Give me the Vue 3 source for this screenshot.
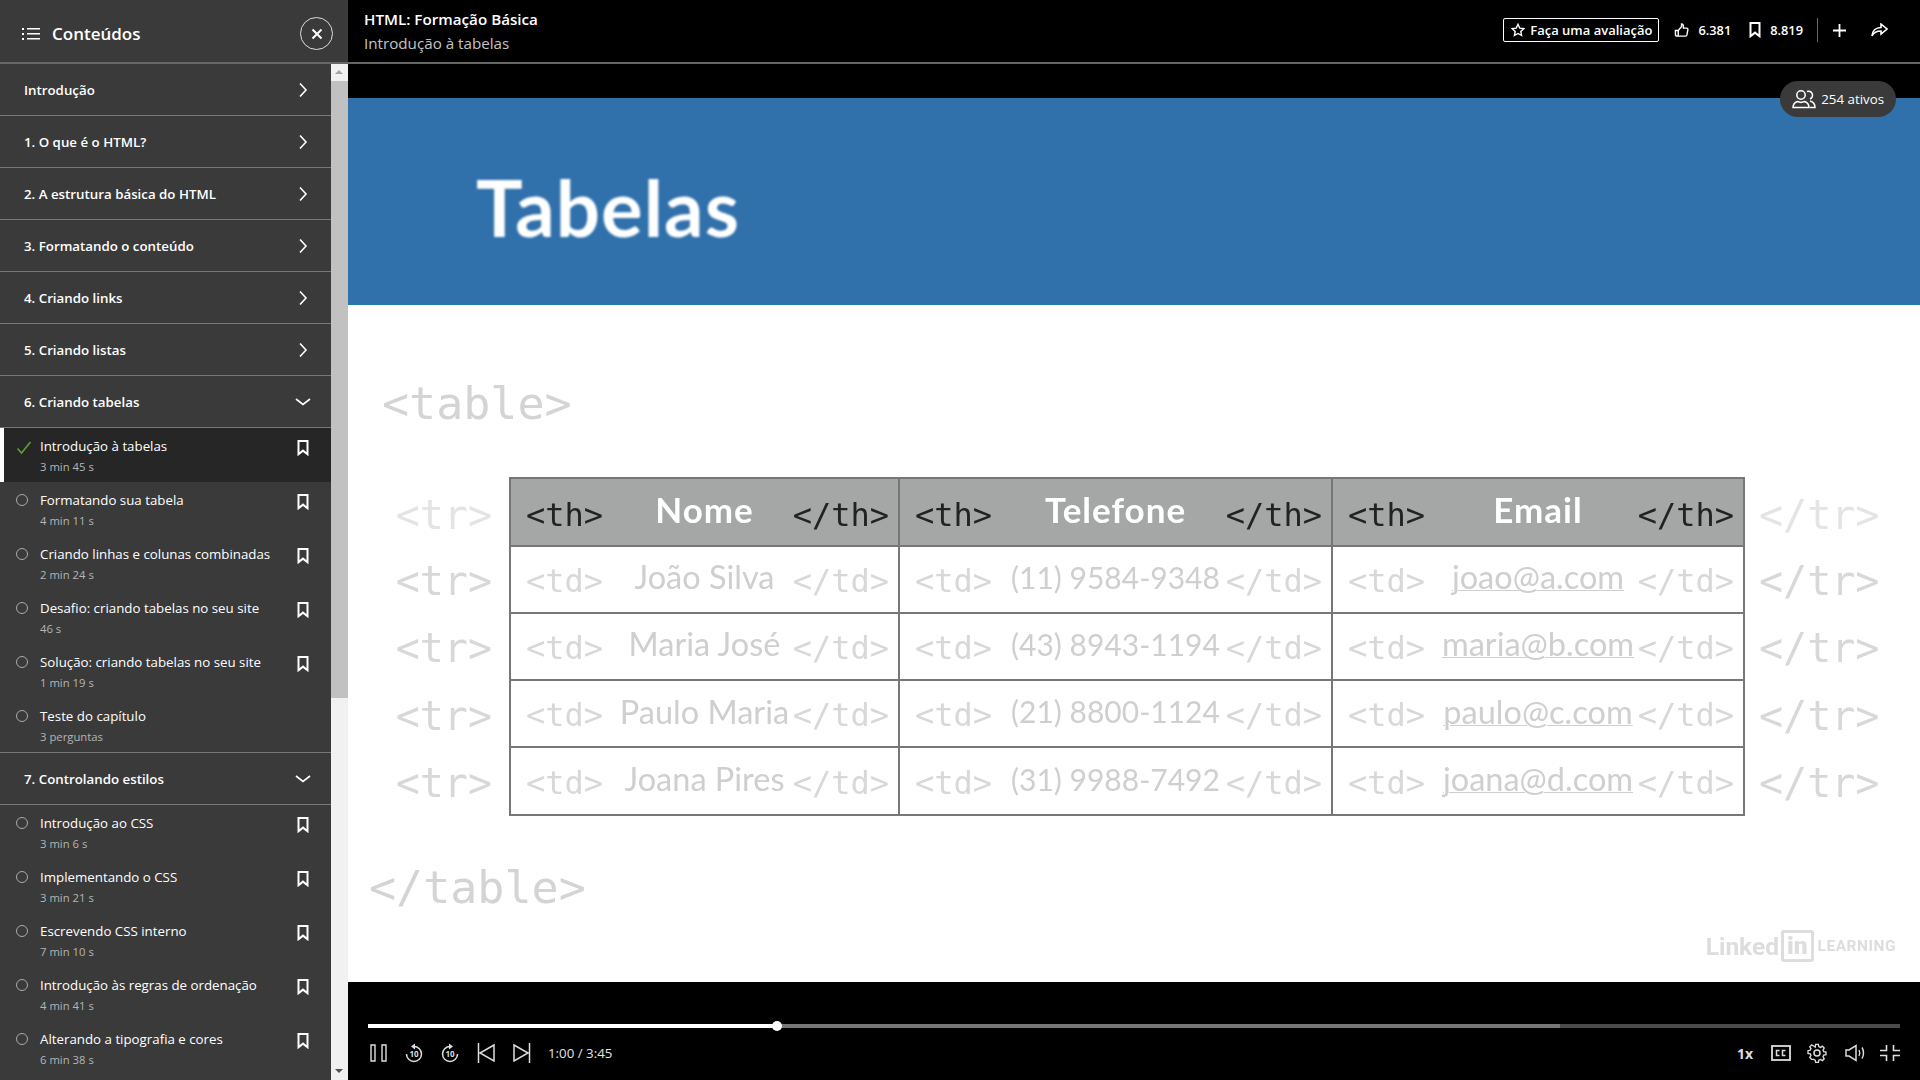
<template>
  <div class="player">
    <svg class="defs" width="0" height="0">
      <defs>
        <symbol id="bookmark" viewBox="0 0 12 16">
          <path d="M1.500 1h9v13.200L6 10.600l-4.500 3.600z" fill="none" stroke="currentColor" stroke-width="2" />
        </symbol>
        <symbol id="chev-right" viewBox="0 0 10 16">
          <path d="M2 1.500 8 8l-6 6.500" fill="none" stroke="currentColor" stroke-width="1.600" />
        </symbol>
      </defs>
    </svg>

    <aside class="sidebar">
      <header class="side-head">
        <svg class="list-icon" width="18" height="16" viewBox="0 0 18 16">
          <path d="M0 2h2v2H0zM0 7h2v2H0zM0 12h2v2H0zM5 2h13v1.500H5zM5 7h13v1.500H5zM5 12h13v1.500H5z" fill="#fff" />
        </svg>
        <span class="side-title">Conteúdos</span>
        <button class="close">
          <svg width="12" height="12" viewBox="0 0 12 12">
            <path d="M1.500 1.500l9 9M10.500 1.500l-9 9" stroke="#fff" stroke-width="2" />
          </svg>
        </button>
      </header>
      <div class="side-body">
        <div class="toc">
          <template v-for="(s, si) in sections" :key="s.name">
            <div class="section" :class="{ ruled: si === 7 }">
              <span>{{ s.name }}</span>
              <svg v-if="!s.lessons" class="chev" width="10" height="16"><use href="#chev-right" /></svg>
              <svg v-else class="chev-down" width="16" height="10" viewBox="0 0 16 10">
                <path d="M1 2l7 5.500L15 2" fill="none" stroke="#fff" stroke-width="1.600" />
              </svg>
            </div>
            <div
              v-for="l in s.lessons"
              :key="l.title"
              class="lesson"
              :class="{ active: l.done }"
            >
              <svg v-if="l.done" class="state" width="16" height="14" viewBox="0 0 16 14">
                <path d="M1.500 7.500 5.500 12 14.500 1" fill="none" stroke="#5f9e3a" stroke-width="1.600" />
              </svg>
              <span v-else class="dot"></span>
              <div class="lesson-text">
                <div class="lesson-title">{{ l.title }}</div>
                <div class="lesson-time">{{ l.time }}</div>
              </div>
              <svg v-if="!l.quiz" class="mark" width="12" height="16"><use href="#bookmark" /></svg>
            </div>
          </template>
          <div class="toc-end"></div>
        </div>
        <div class="scrollbar">
          <span class="arrow up"></span>
          <span class="thumb"></span>
          <span class="arrow down"></span>
        </div>
      </div>
    </aside>

    <main class="main">
      <header class="topbar">
        <div class="titles">
          <div class="course">HTML: Formação Básica</div>
          <div class="video">Introdução à tabelas</div>
        </div>
        <div class="actions">
          <button class="rate">
            <svg width="14" height="14" viewBox="0 0 16 16">
              <path d="M8 1.500l2 4.300 4.700.6-3.500 3.200.9 4.700L8 12l-4.100 2.300.9-4.700L1.300 6.400 6 5.800z" fill="none" stroke="#fff" stroke-width="1.600" />
            </svg>
            Faça uma avaliação
          </button>
          <span class="stat">
            <svg width="15" height="16" viewBox="0 0 16 16">
              <path d="M1.500 8.500h3v6h-1a2 2 0 0 1-2-2zM4.500 8.500 8 4.500V1.500c1.500 0 2 1 2 2.500v2h3.500c1 0 1.500.8 1.300 1.700l-1 5.500c-.2.800-.7 1.300-1.500 1.300h-7.300" fill="none" stroke="#fff" stroke-width="1.500" />
            </svg>
            6.381
          </span>
          <span class="stat">
            <svg width="12" height="16"><use href="#bookmark" /></svg>
            8.819
          </span>
          <span class="divider"></span>
          <svg class="plus" width="13" height="13" viewBox="0 0 13 13">
            <path d="M6.500 0v13M0 6.500h13" stroke="#fff" stroke-width="1.800" />
          </svg>
          <svg class="share" width="17" height="14" viewBox="0 0 17 14">
            <path d="M10 1l6 5-6 5V8C6 8 3 9 1 13c.3-5 3.500-8.500 9-8.500z" fill="none" stroke="#fff" stroke-width="1.600" />
          </svg>
        </div>
      </header>

      <section class="stage">
        <div class="presence">
          <svg width="24" height="20" viewBox="0 0 24 20">
            <circle cx="9" cy="6" r="4.200" fill="none" stroke="#fff" stroke-width="1.500" />
            <path d="M1 18.500c0-3 1.500-5 4.500-6l3.500 1 3.500-1c3 1 4.500 3 4.500 6z" fill="none" stroke="#fff" stroke-width="1.500" />
            <path d="M15 2.500a3.800 3.800 0 0 1 3 7.500M18 12c3 .7 5 2.600 5 6.500h-5" fill="none" stroke="#fff" stroke-width="1.500" />
          </svg>
          254 ativos
        </div>
        <div class="slide">
          <div class="banner"><h1>Tabelas</h1></div>
          <div class="slide-body">
            <div class="code-open">&lt;table&gt;</div>
            <div class="grid">
              <template v-for="(r, i) in rows" :key="r[0]">
                <div class="tr-tag left" :class="{ faint: i === 0 }">&lt;tr&gt;</div>
                <div
                  v-for="(cell, c) in r"
                  :key="cell"
                  class="cell"
                  :class="{ head: i === 0, first: c === 0, phone: i > 0 && c === 1, mail: i > 0 && c === 2 }"
                >
                  <span class="tag">{{ i === 0 ? '&lt;th&gt;' : '&lt;td&gt;' }}</span>
                  <span class="value">{{ cell }}</span>
                  <span class="tag end">{{ i === 0 ? '&lt;/th&gt;' : '&lt;/td&gt;' }}</span>
                </div>
                <div class="tr-tag right" :class="{ faint: i === 0 }">&lt;/tr&gt;</div>
              </template>
            </div>
            <div class="code-close">&lt;/table&gt;</div>
            <div class="watermark">Linked<b>in</b><small>LEARNING</small></div>
          </div>
        </div>
      </section>

      <footer class="controls">
        <div class="progress">
          <span class="played"></span>
          <span class="knob"></span>
          <span class="buffered"></span>
        </div>
        <div class="ctrl-row">
          <div class="ctrl-left">
            <svg width="17" height="18" viewBox="0 0 17 18">
              <path d="M1 1h4v16H1zM12 1h4v16h-4z" fill="none" stroke="#ddd" stroke-width="1.400" />
            </svg>
            <svg width="18" height="20" viewBox="0 0 18 20">
              <path d="M9 3.500a7.500 7.500 0 1 1-7.500 7.500" fill="none" stroke="#ddd" stroke-width="1.500" />
              <path d="M10 .5 6 3.500l4 3z" fill="#ddd" />
              <text x="9" y="14" text-anchor="middle" class="skip">10</text>
            </svg>
            <svg width="18" height="20" viewBox="0 0 18 20">
              <path d="M9 3.500a7.500 7.500 0 1 0 7.500 7.500" fill="none" stroke="#ddd" stroke-width="1.500" />
              <path d="M8 .5l4 3-4 3z" fill="#ddd" />
              <text x="9" y="14" text-anchor="middle" class="skip">10</text>
            </svg>
            <svg width="18" height="20" viewBox="0 0 18 20">
              <path d="M1.500 0v20M17 2 3 10l14 8z" fill="none" stroke="#ddd" stroke-width="1.500" />
            </svg>
            <svg width="18" height="20" viewBox="0 0 18 20">
              <path d="M16.500 0v20M1 2l14 8-14 8z" fill="none" stroke="#ddd" stroke-width="1.500" />
            </svg>
            <span class="time">1:00 / 3:45</span>
          </div>
          <div class="ctrl-right">
            <span class="speed">1x</span>
            <svg width="20" height="16" viewBox="0 0 20 16">
              <rect x="1" y="1" width="18" height="14" fill="none" stroke="#ddd" stroke-width="1.800" />
              <path d="M8.500 5.500h-3v5h3M14.500 5.500h-3v5h3" fill="none" stroke="#ddd" stroke-width="1.500" />
            </svg>
            <svg width="20" height="20" viewBox="0 0 20 20">
              <circle cx="10" cy="10" r="3" fill="none" stroke="#ddd" stroke-width="1.500" />
              <path d="M8.500 1h3l.5 2.500 1.800.8 2.200-1.300 2 2.100-1.300 2.100.8 1.800 2.500.5v3l-2.500.5-.8 1.800 1.300 2.200-2 2-2.200-1.300-1.800.8-.5 2.500h-3l-.5-2.500-1.800-.8L4 17.500l-2-2 1.300-2.200-.8-1.800L0 11V8l2.500-.5.8-1.800L2 3.600l2-2.100 2.200 1.300L8 4z" transform="translate(1 .5) scale(.9)" fill="none" stroke="#ddd" stroke-width="1.500" />
            </svg>
            <svg class="speaker" width="21" height="18" viewBox="0 0 21 18">
              <path d="M1 6h3l7-4.500v15L4 12H1z" fill="none" stroke="#ddd" stroke-width="1.500" />
              <path d="M14 6c1 1.800 1 4.200 0 6M17 3.500c2 3 2 8 0 11" fill="none" stroke="#ddd" stroke-width="1.400" />
            </svg>
            <svg width="20" height="16" viewBox="0 0 20 16">
              <path d="M0 5.500h6.500V0M13.500 0v5.500H20M0 10.500h6.500V16M13.500 16v-5.500H20" fill="none" stroke="#ddd" stroke-width="1.600" />
            </svg>
          </div>
        </div>
      </footer>
    </main>
  </div>
</template>

<script setup>
const sections = [
  { name: 'Introdução' },
  { name: '1. O que é o HTML?' },
  { name: '2. A estrutura básica do HTML' },
  { name: '3. Formatando o conteúdo' },
  { name: '4. Criando links' },
  { name: '5. Criando listas' },
  {
    name: '6. Criando tabelas',
    lessons: [
      { title: 'Introdução à tabelas', time: '3 min 45 s', done: true },
      { title: 'Formatando sua tabela', time: '4 min 11 s' },
      { title: 'Criando linhas e colunas combinadas', time: '2 min 24 s' },
      { title: 'Desafio: criando tabelas no seu site', time: '46 s' },
      { title: 'Solução: criando tabelas no seu site', time: '1 min 19 s' },
      { title: 'Teste do capítulo', time: '3 perguntas', quiz: true }
    ]
  },
  {
    name: '7. Controlando estilos',
    lessons: [
      { title: 'Introdução ao CSS', time: '3 min 6 s' },
      { title: 'Implementando o CSS', time: '3 min 21 s' },
      { title: 'Escrevendo CSS interno', time: '7 min 10 s' },
      { title: 'Introdução às regras de ordenação', time: '4 min 41 s' },
      { title: 'Alterando a tipografia e cores', time: '6 min 38 s' }
    ]
  }
]

const rows = [
  ['Nome', 'Telefone', 'Email'],
  ['João Silva', '(11) 9584-9348', 'joao@a.com'],
  ['Maria José', '(43) 8943-1194', 'maria@b.com'],
  ['Paulo Maria', '(21) 8800-1124', 'paulo@c.com'],
  ['Joana Pires', '(31) 9988-7492', 'joana@d.com']
]
</script>

<style>
html, body { background: #000; overflow: hidden; }
</style>

<style scoped>
.player {
  display: flex;
  width: 1920px;
  height: 1080px;
  overflow: hidden;
  background: #000;
  color: #fff;
  font-family: "Open Sans", "Noto Sans", sans-serif;
}
.defs { position: absolute; }

.sidebar {
  display: flex;
  flex-direction: column;
  flex: 0 0 348px;
  background: #3a3a3a;
}
.side-head {
  display: flex;
  align-items: center;
  height: 57px;
  padding: 5px 16px 0 22px;
  border-bottom: 2px solid #666;
  box-sizing: content-box;
}
.list-icon { margin-right: 12px; }
.side-title { flex: 1; font-size: 17px; font-weight: 600; }
.close {
  display: flex;
  align-items: center;
  justify-content: center;
  width: 33px;
  height: 33px;
  padding: 0;
  margin-right: -1px;
  background: none;
  border: 1px solid #ddd;
  border-radius: 50%;
}
.side-body { display: flex; flex: 1; min-height: 0; }
.toc { flex: 1; min-width: 0; }
.section {
  display: flex;
  align-items: center;
  justify-content: space-between;
  height: 52px;
  box-sizing: border-box;
  padding: 0 23px 0 24px;
  border-bottom: 1px solid #777;
  font-size: 13.300px;
  font-weight: 600;
}
.section.ruled { height: 53px; border-top: 1px solid #777; }
.chev-down { margin-right: -3px; }
.lesson {
  display: flex;
  align-items: flex-start;
  height: 54px;
  box-sizing: border-box;
  padding: 8px 22px 0 16px;
}
.lesson.active {
  background: #262626;
  box-shadow: inset 4px 0 0 #fff;
}
.dot {
  flex: none;
  width: 12px;
  height: 12px;
  box-sizing: border-box;
  margin: 4px 12px 0 0;
  border: 1px solid #aaa;
  border-radius: 50%;
}
.state { flex: none; margin: 5px 8px 0 0; }
.lesson-text { flex: 1; min-width: 0; }
.lesson-title { font-size: 13.300px; line-height: 20px; }
.lesson-time { margin-top: 2px; font-size: 11.300px; line-height: 18px; color: #b5b5b5; }
.mark { flex: none; margin-top: 4px; }
.toc-end { height: 4px; }
.scrollbar {
  display: flex;
  flex-direction: column;
  flex: 0 0 17px;
  background: #f1f1f1;
}
.thumb { flex: 0 0 617px; background: #c1c1c1; }
.arrow { flex: 0 0 17px; position: relative; }
.arrow::after {
  content: "";
  position: absolute;
  left: 4px;
  border-left: 4px solid transparent;
  border-right: 4px solid transparent;
}
.arrow.up::after { top: 6px; border-bottom: 4px solid #a3a3a3; }
.arrow.down { margin-top: auto; }
.arrow.down::after { top: 6px; border-top: 4px solid #505050; }

.main { display: flex; flex-direction: column; flex: 1; min-width: 0; }
.topbar {
  display: flex;
  align-items: center;
  justify-content: space-between;
  height: 62px;
  padding: 0 32px 0 16px;
  border-bottom: 2px solid #666;
  box-sizing: content-box;
}
.course { font-size: 15.200px; font-weight: 600; line-height: 22px; }
.video { margin-top: 2px; font-size: 15.200px; line-height: 22px; color: #c4c4c4; }
.actions { display: flex; align-items: center; margin-top: -2px; }
.rate {
  display: flex;
  align-items: center;
  gap: 5px;
  height: 24px;
  margin-right: -3px;
  padding: 0 6px 0 7px;
  background: none;
  border: 1px solid #fff;
  border-radius: 2px;
  color: #fff;
  font: 600 13px "Open Sans", sans-serif;
}
.stat {
  display: flex;
  align-items: center;
  margin-left: 18px;
  gap: 9px;
  font-size: 12.800px;
  font-weight: 600;
}
.divider { width: 1px; height: 24px; margin: 0 15px 0 14px; background: #666; }
.share { margin-left: 25px; }

.stage { position: relative; flex: 1; min-height: 0; overflow: hidden; background: #000; }
.presence {
  position: absolute;
  top: 17px;
  right: 24px;
  display: flex;
  align-items: center;
  gap: 5px;
  height: 36px;
  padding: 0 12px;
  background: #3a3a3a;
  border-radius: 18px;
  font-size: 13.300px;
}

.slide { display: flex; flex-direction: column; height: 884px; margin-top: 34px; }
.banner {
  flex: 0 0 207px;
  display: flex;
  align-items: center;
  padding: 12px 0 0 128px;
  box-sizing: border-box;
  background: #3070ab;
  border-bottom: 2px solid #1f7aa6;
}
.banner h1 {
  margin: 0;
  font: 700 78px Lato, sans-serif;
  letter-spacing: 1px;
  color: #fff;
  filter: blur(.8px);
}
.slide-body {
  position: relative;
  flex: 1;
  padding-top: 73px;
  background: #fff;
  font-family: "DejaVu Sans Mono", monospace;
  color: #d8d8d8;
  filter: blur(.4px);
}
.code-open { padding-left: 34px; font-size: 45px; line-height: 52px; color: #d4d4d4; }
.code-close { margin-top: 42px; padding-left: 21px; font-size: 45px; line-height: 60px; color: #d4d4d4; }
.grid {
  display: grid;
  grid-template-columns: 161px 391px 433px 412px 1fr;
  grid-template-rows: 69.500px repeat(4, 67.300px);
  margin-top: 47px;
}
.tr-tag { display: flex; align-items: center; padding-top: 2px; font-size: 40px; }
.tr-tag.left { justify-content: flex-end; padding-right: 17px; }
.tr-tag.right { padding-left: 14px; }
.tr-tag.faint { padding-top: 6px; color: #e4e4e4; }
.cell {
  display: grid;
  grid-template-columns: minmax(0, 1fr) auto minmax(0, 1fr);
  align-items: center;
  padding: 3px 9px 0;
  border-bottom: 2px solid #777;
  border-right: 2px solid #777;
  font-size: 32px;
}
.cell.first { border-left: 2px solid #777; }
.cell.head {
  padding-top: 6px;
  background: #a5a7a7;
  border-top: 2px solid #777;
  color: #222;
}
.tag { margin-left: 6px; }
.tag.end { justify-self: end; }
.value {
  margin-top: -8px;
  text-align: center;
  font-family: Lato, sans-serif;
  font-size: 32.500px;
  color: #cfcfcf;
  white-space: nowrap;
}
.phone .value { font-size: 30px; }
.head .value { margin-top: -12px; color: #fff; font-weight: 700; font-size: 35px; letter-spacing: 1px; }
.mail .value { text-decoration: underline; text-decoration-thickness: 1px; }
.watermark {
  position: absolute;
  right: 24px;
  bottom: 20px;
  display: flex;
  align-items: center;
  font: 700 24.500px Roboto, sans-serif;
  color: #ddd;
  filter: blur(.7px);
}
.watermark b {
  margin-left: 2px;
  padding: 0 3px;
  border: 3px solid #ddd;
  border-radius: 3px;
  line-height: 26px;
}
.watermark small { margin-left: 4px; font-size: 15.500px; letter-spacing: .5px; }

.controls { flex: 0 0 98px; height: 98px; padding: 42px 20px 0; box-sizing: border-box; background: #000; }
.progress { position: relative; display: flex; height: 4px; background: #4a4a4a; }
.played { width: 408px; background: #fff; }
.buffered { width: 784px; background: #777; }
.knob {
  position: absolute;
  left: 404px;
  top: -3px;
  width: 10px;
  height: 10px;
  background: #fff;
  border-radius: 50%;
}
.ctrl-row { display: flex; align-items: center; justify-content: space-between; height: 20px; margin-top: 15px; }
.ctrl-left { display: flex; align-items: center; gap: 18px; padding-left: 2px; }
.ctrl-right { display: flex; align-items: center; gap: 16px; }
.speaker { margin-left: 2px; margin-right: -2px; }
.time { margin-left: -1px; font-size: 13.300px; color: #e4e4e4; }
.speed { margin-right: 2px; font-size: 14px; font-weight: 700; color: #ddd; }
.skip { font: 700 8px "Open Sans", sans-serif; fill: #ddd; }
</style>
